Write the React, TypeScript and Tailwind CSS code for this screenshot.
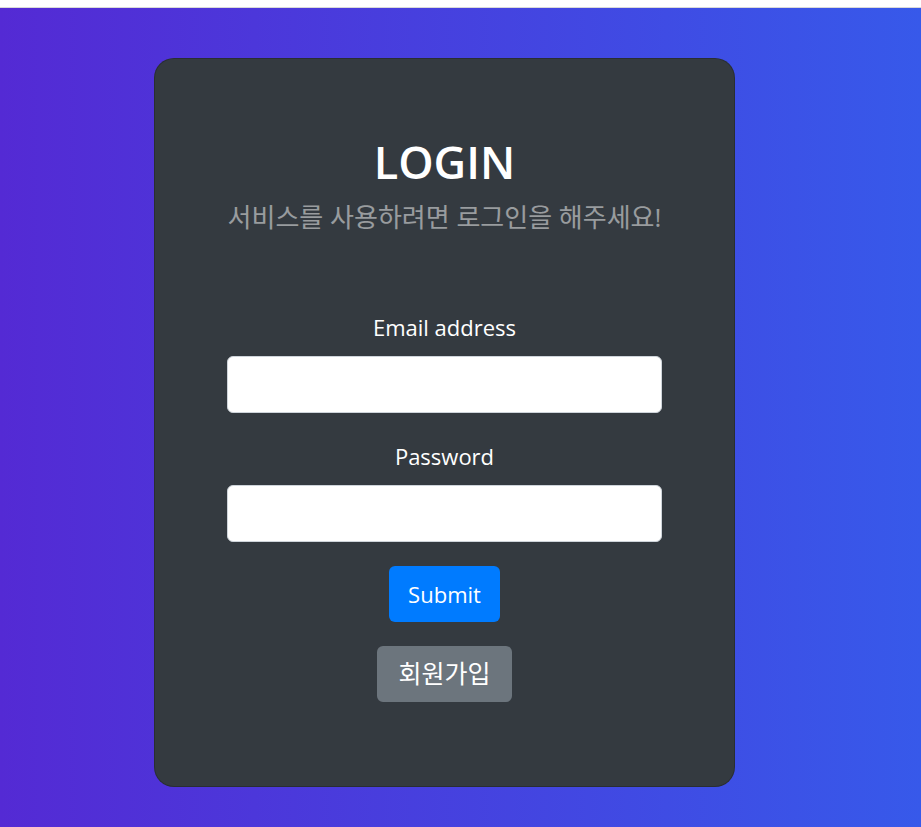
export default function App() {
  return (
    <main className="min-h-screen bg-white font-['Open_Sans','Noto_Sans_CJK_KR',sans-serif]">
      {/* top strip */}
      <div className="h-[7px] bg-white" />
      <div className="h-px bg-[#d9d9d9]" />

      {/* gradient page */}
      <section className="h-[819px] bg-[linear-gradient(to_right,#542ad4,#3759ea)] pl-[154px] pt-[50px]">
        <div className="flex h-[729px] w-[581px] flex-col items-center rounded-[20px] border border-black/20 bg-[#343a40] px-[72px] pt-[76px]">
          <h1 className="text-[45px] leading-[54px] font-semibold text-white">LOGIN</h1>
          <p className="mt-[9px] text-[26px] leading-[38px] text-white/50">
            서비스를 사용하려면 로그인을 해주세요!
          </p>

          <form className="mt-[75px] flex w-full flex-col items-center">
            <label className="text-[22px] leading-[33px] text-white">Email address</label>
            <input
              type="email"
              className="mt-[12px] h-[57px] w-full rounded-[6px] border border-[#ced4da] bg-white px-4 outline-none"
            />

            <label className="mt-[27px] text-[22px] leading-[33px] text-white">Password</label>
            <input
              type="password"
              className="mt-[12px] h-[57px] w-full rounded-[6px] border border-[#ced4da] bg-white px-4 outline-none"
            />

            <button
              type="button"
              className="mt-[24px] flex h-[56px] items-center rounded-[6px] bg-[#007bff] px-[19px] text-[22px] text-white"
            >
              Submit
            </button>
            <button
              type="button"
              className="mt-[24px] flex h-[56px] items-center rounded-[6px] bg-[#6c757d] px-[21px] text-[25px] text-white"
            >
              회원가입
            </button>
          </form>
        </div>
      </section>
    </main>
  );
}
